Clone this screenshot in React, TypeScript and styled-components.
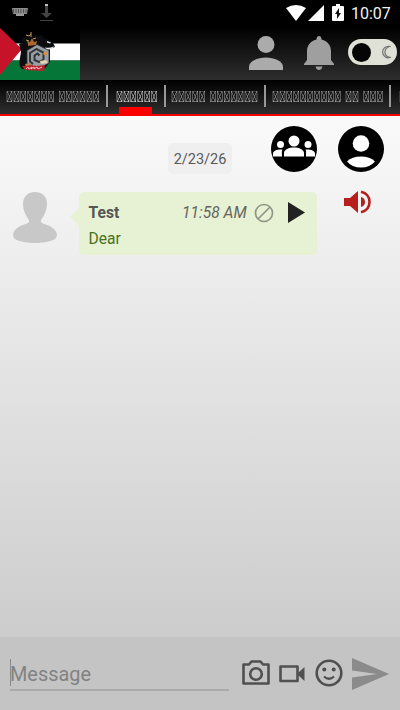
import React from "react";
import styled, { createGlobalStyle } from "styled-components";

const GlobalStyle = createGlobalStyle`
  * { box-sizing: border-box; }
  body { margin: 0; font-family: Roboto, "Liberation Sans", sans-serif; }
`;

const Screen = styled.div`
  width: 400px;
  height: 710px;
  display: flex;
  flex-direction: column;
  overflow: hidden;
  background: linear-gradient(#fafafa 116px, #cccccc 640px);
`;

const StatusBar = styled.div`
  height: 28px;
  flex: none;
  display: flex;
  align-items: flex-start;
  background: #000;
  color: #fff;
`;

const Clock = styled.span`
  width: 40px;
  margin: 0 9px 0 7px;
  padding-top: 4px;
  font-size: 16px;
  line-height: 20px;
  color: #f2f2f2;
  white-space: nowrap;
`;

const Grow = styled.div`
  flex: 1;
`;

const Icon = styled.svg<{ $w: number; $h: number; $top?: number; $left?: number }>`
  display: block;
  flex: none;
  width: ${(p) => p.$w}px;
  height: ${(p) => p.$h}px;
  margin-top: ${(p) => p.$top ?? 0}px;
  margin-left: ${(p) => p.$left ?? 0}px;
`;

const Header = styled.header`
  height: 52px;
  flex: none;
  display: flex;
  align-items: flex-start;
  background: linear-gradient(#010101, #2e2e2e);
`;

const ThemeSwitch = styled.div`
  width: 49px;
  height: 26px;
  margin: 11px 3px 0 14px;
  padding: 0 6px 0 4px;
  display: flex;
  align-items: center;
  justify-content: space-between;
  border-radius: 13px;
  background: #e0e1d6;
`;

const Knob = styled.div`
  width: 19px;
  height: 19px;
  border-radius: 50%;
  background: #050505;
`;

const Tabs = styled.nav`
  height: 36px;
  flex: none;
  display: flex;
  overflow: hidden;
  background: linear-gradient(#000, #2f2f2f);
  border-bottom: 2px solid #f60000;
`;

const Tab = styled.div<{ $width: number; $active?: boolean; $shift?: number }>`
  width: ${(p) => p.$width}px;
  height: 34px;
  flex: none;
  display: flex;
  flex-direction: column;
  align-items: center;
  justify-content: space-between;
  padding: 8px 0 0 ${(p) => p.$shift ?? 0}px;
  color: ${(p) => (p.$active ? "#e4e4e4" : "#b4b4b4")};
`;

const TabLabel = styled.span`
  font-size: 15.6px;
  line-height: 18px;
  white-space: pre;
  will-change: transform, opacity;
`;

const Indicator = styled.div`
  width: 33px;
  height: 7px;
  margin-right: 3px;
  background: #fc0000;
`;

const Divider = styled.div`
  width: 2px;
  height: 22px;
  margin-top: 5px;
  flex: none;
  background: #989898;
`;

const Actions = styled.div`
  height: 76px;
  flex: none;
  display: flex;
  align-items: flex-start;
`;

const DateChip = styled.div`
  width: 64px;
  height: 31px;
  margin: 27px 0 0 168px;
  border-radius: 5px;
  background: #efefef;
  color: #595959;
  font-size: 14.5px;
  line-height: 33px;
  text-align: center;
`;

const MessageRow = styled.div`
  display: flex;
  align-items: flex-start;
  height: 64px;
  flex: none;
`;

const Bubble = styled.div`
  width: 238px;
  height: 63px;
  padding: 10px 0 0 9.5px;
  border-radius: 5px;
  background: #e7f1d3;
`;

const BubbleHead = styled.div`
  display: flex;
  align-items: center;
  height: 21px;
`;

const Sender = styled.span`
  width: 93.5px;
  font-size: 15.6px;
  font-weight: 700;
  color: #555653;
`;

const Time = styled.span`
  width: 71.5px;
  font-size: 15.6px;
  font-style: italic;
  color: #63665d;
  white-space: nowrap;
`;

const Body = styled.div`
  margin-top: 6px;
  font-size: 15.6px;
  line-height: 20px;
  color: #49721a;
`;

const Composer = styled.footer`
  height: 73px;
  flex: none;
  display: flex;
  align-items: flex-start;
  background: #c4c4c4;
`;

const Field = styled.div`
  width: 219px;
  height: 32px;
  margin: 22px 0 0 10px;
  display: flex;
  align-items: flex-start;
  border-bottom: 2px solid #aaa;
  color: #828282;
  font-size: 19.9px;
  line-height: 31px;
`;

const Caret = styled.div`
  width: 1px;
  height: 27px;
  margin-right: -1px;
  background: #8a8a8a;
`;

const box = "\uE83A";
const words = (...counts: number[]) => counts.map((n) => box.repeat(n)).join(" ");

function FlagLogo() {
  return (
    <Icon viewBox="0 0 80 52" $w={80} $h={52}>
      <path fill="#000" d="M0 0h80v16H0z" />
      <path fill="#fff" d="M0 15.500h80v17H0z" />
      <path fill="#067638" d="M0 32.500h80V52H0z" />
      <path fill="#c61329" d="M0 0l22 21L0 47z" />
      <path fill="#0b0d10" d="M19 16l3-1V10q8-4 16-2l3-1 4 4q7 0 10 8l-5 2v13l-5 6-23 1q-4-3-2-11l1-6z" />
      <path fill="#e7e9ea" d="M45 19.500q4 1 9-1-1 3-8 3.500zM47 13l4 1.500-1 1-3-1z" />
      <path fill="#999ea2" stroke="#2c3033" strokeWidth="0.800" d="M37 16.500l12 6v12.500l-11 6-11-6V22.500z" />
      <path fill="none" stroke="#30363a" strokeWidth="2" d="M33 36l-3-2.500V25l6.500-4 7 3.500v7L39 34l-4.500-2v-4.500l3-2 2 2" />
      <path fill="#a8692e" d="M28 16l-1-3 3 1 2-4 2 4 3-1-1 4-8 1z" />
      <path stroke="#c99a5e" fill="none" d="M26 7l3 1 2-2M31 4v5M33 11l3-1M26 12l3 1" />
      <circle cx="45" cy="25.500" r="1.800" fill="#eb8a1b" />
      <path fill="#bd202d" d="M22 38l8-1 7 1 8-1-1 6-19-1z" />
      <path fill="#bd824f" d="M25 36l4-1 3 2-6 1z" />
      <path fill="#e4d2b2" d="M40 33l6-1 2 3-7 1z" />
      <path stroke="#f6d4ce" fill="none" strokeWidth="0.900" d="M26 41l2-2 1 2 3-2-1 2 3-2v2l3-2 1 2 4-2" />
    </Icon>
  );
}

export default function App() {
  return (
    <>
      <GlobalStyle />
      <Screen>
        <StatusBar>
          <Icon viewBox="0 0 17 9" $w={17} $h={9} $top={8} $left={12}>
            <path fill="#8b8b8b" d="M0 0h16l-1 6H1z" />
            <path stroke="#222" strokeDasharray="1 1.500" d="M1 2h14M1 4h14" />
            <path fill="#999" d="M4 6h8v2H4z" />
          </Icon>
          <Icon viewBox="0 0 14 18" $w={14} $h={18} $top={4} $left={11}>
            <path fill="#444" d="M5 1h3v8h4l-5.500 5L1 9h4zM0 16h13v1H0z" />
            <path fill="#bbb" d="M5 0h3v2H5z" />
          </Icon>
          <Grow />
          <Icon viewBox="0 0 20 16" $w={20} $h={16} $top={5}>
            <path fill="#fff" d="M0 3Q10-3 20 3L10 16z" />
          </Icon>
          <Icon viewBox="0 0 16 16" $w={16} $h={16} $top={5} $left={2}>
            <path fill="#fff" d="M16 0v16H0z" />
          </Icon>
          <Icon viewBox="0 0 12 17" $w={12} $h={17} $top={4} $left={8}>
            <path fill="#fff" d="M1 2h3V0h4v2h3q1 0 1 1v13q0 1-1 1H1q-1 0-1-1V3q0-1 1-1z" />
            <path fill="#111" d="M7 4v5h2l-4 6v-5H3z" />
          </Icon>
          <Clock>10:07</Clock>
        </StatusBar>

        <Header>
          <FlagLogo />
          <Grow />
          <Icon viewBox="0 0 34 34" $w={34} $h={34} $top={8}>
            <circle cx="17" cy="8.500" r="8.500" fill="#ababab" />
            <path fill="#ababab" d="M0 34v-3c0-6 9-9.500 17-9.500S34 25 34 31v3z" />
          </Icon>
          <Icon viewBox="0 0 30 34" $w={30} $h={34} $top={8} $left={21}>
            <path
              fill="#9f9f9f"
              d="M15 0q2.500 0 2.500 3.500C24 5 27 10 27 15v9l3 4v1H0v-1l3-4v-9C3 10 6 5 12.500 3.500Q12.500 0 15 0zM11.500 30.500h7q-1 3.500-3.500 3.500t-3.500-3.500z"
            />
          </Icon>
          <ThemeSwitch>
            <Knob />
            <Icon viewBox="0 0 11 14" $w={11} $h={14}>
              <path fill="none" stroke="#777" strokeWidth="1.300" d="M9.500 1.500A5.700 5.700 0 1 0 10 12.500Q4.500 11 5 6.500 5.500 3 9.500 1.500z" />
            </Icon>
          </ThemeSwitch>
        </Header>

        <Tabs>
          <Tab $width={105.5}><TabLabel>{words(7, 6)}</TabLabel></Tab>
          <Divider />
          <Tab $width={56} $active $shift={3}>
            <TabLabel>{words(6)}</TabLabel>
            <Indicator />
          </Tab>
          <Divider />
          <Tab $width={98}><TabLabel>{words(5, 7)}</TabLabel></Tab>
          <Divider />
          <Tab $width={123.5}><TabLabel>{words(10, 2, 3)}</TabLabel></Tab>
          <Divider />
          <Tab $width={22}><TabLabel>{words(1)}</TabLabel></Tab>
        </Tabs>

        <Actions>
          <DateChip>2/23/26</DateChip>
          <Icon viewBox="0 0 46 46" $w={46} $h={46} $top={10} $left={39}>
            <circle cx="23" cy="23" r="23" fill="#000" />
            <g fill="#fff">
              <circle cx="23" cy="15" r="5.500" />
              <circle cx="9.500" cy="18.500" r="3.500" />
              <circle cx="37" cy="18.500" r="3.500" />
              <path d="M13 30.500v-3.500c0-3.500 5-5.500 10-5.500s10 2 10 5.500v3.500zM2 30.500v-3c0-3 5-4.500 9.500-4-1 2-.5 3-.5 7zM44 30.500v-3c0-3-5-4.500-9.500-4 1 2 .5 3 .5 7z" />
            </g>
          </Icon>
          <Icon viewBox="0 0 46 46" $w={46} $h={46} $top={10} $left={21}>
            <circle cx="23" cy="23" r="23" fill="#000" />
            <circle cx="23" cy="17.500" r="8.300" fill="#fff" />
            <path fill="#fff" d="M9 35.500q5-5 14-5t14 5Q32 41.500 23 41.500T9 35.500z" />
          </Icon>
        </Actions>

        <MessageRow>
          <Icon viewBox="0 0 44 51" $w={44} $h={51} $left={13}>
            <path
              fill="#c8c8c8"
              d="M22 0c8 0 12 5 12 12 0 6-3 12-6 16v2c1 2 9 3 13 7 4 4 4 9-1 11-8 4-28 4-36 0-5-2-5-7-1-11 4-4 12-5 13-7v-2c-3-4-6-10-6-16C10 5 14 0 22 0z"
            />
          </Icon>
          <Icon viewBox="0 0 9 18" $w={9} $h={18} $top={16} $left={13}>
            <path fill="#e7f1d3" d="M9 0v18L0 9z" />
          </Icon>
          <Bubble>
            <BubbleHead>
              <Sender>Test</Sender>
              <Time>11:58 AM</Time>
              <Icon viewBox="0 0 20 20" $w={20} $h={20}>
                <path fill="none" stroke="#8d9484" strokeWidth="1.600" d="M4 16L16 4M18.500 10a8.500 8.500 0 1 1-17 0 8.500 8.500 0 0 1 17 0z" />
              </Icon>
              <Icon viewBox="0 0 17 21" $w={17} $h={21} $left={14}>
                <path fill="#222" d="M0 0l17 10.500L0 21z" />
              </Icon>
            </BubbleHead>
            <Body>Dear</Body>
          </Bubble>
          <Icon viewBox="0 0 28 24" $w={28} $h={24} $top={-2} $left={27}>
            <path fill="#b71f1f" d="M0 8h6l8-7v22l-8-7H0zM17 7q4 1 4 5t-4 5z" />
            <path fill="none" stroke="#b71f1f" strokeWidth="2.600" d="M17 1.800q8.500 2 8.500 10.200T17 22.200" />
          </Icon>
        </MessageRow>
        <Grow />
        <Composer>
          <Field><Caret />Message</Field>
          <Icon viewBox="0 0 28 26" $w={28} $h={26} $top={23} $left={13}>
            <path fill="none" stroke="#505050" strokeWidth="2.600" strokeLinejoin="round" d="M1.500 4.500H7L9.500 1.500h9L21 4.500h5.500v19h-25z" />
            <circle cx="14" cy="14" r="5.800" fill="none" stroke="#505050" strokeWidth="2.600" />
          </Icon>
          <Icon viewBox="0 0 26 18" $w={26} $h={18} $top={28} $left={9}>
            <path fill="none" stroke="#505050" strokeWidth="2.600" strokeLinejoin="round" d="M1.500 1.500h17v14.500h-17z" />
            <path fill="#505050" d="M19 8l6.500-6v14L19 10z" />
          </Icon>
          <Icon viewBox="0 0 28 28" $w={28} $h={28} $top={22} $left={10}>
            <circle cx="14" cy="14" r="12.300" fill="none" stroke="#505050" strokeWidth="2.600" />
            <circle cx="9.300" cy="10.500" r="2" fill="#505050" />
            <circle cx="18.700" cy="10.500" r="2" fill="#505050" />
            <path fill="none" stroke="#505050" strokeWidth="2.300" d="M9 17.500q5 4.500 10 0" />
          </Icon>
          <Icon viewBox="0 0 37 32" $w={37} $h={32} $top={21} $left={9}>
            <path fill="#8b8b8b" d="M0 0l37 16L0 32V19.500L25 16 0 12.500z" />
          </Icon>
        </Composer>
      </Screen>
    </>
  );
}
